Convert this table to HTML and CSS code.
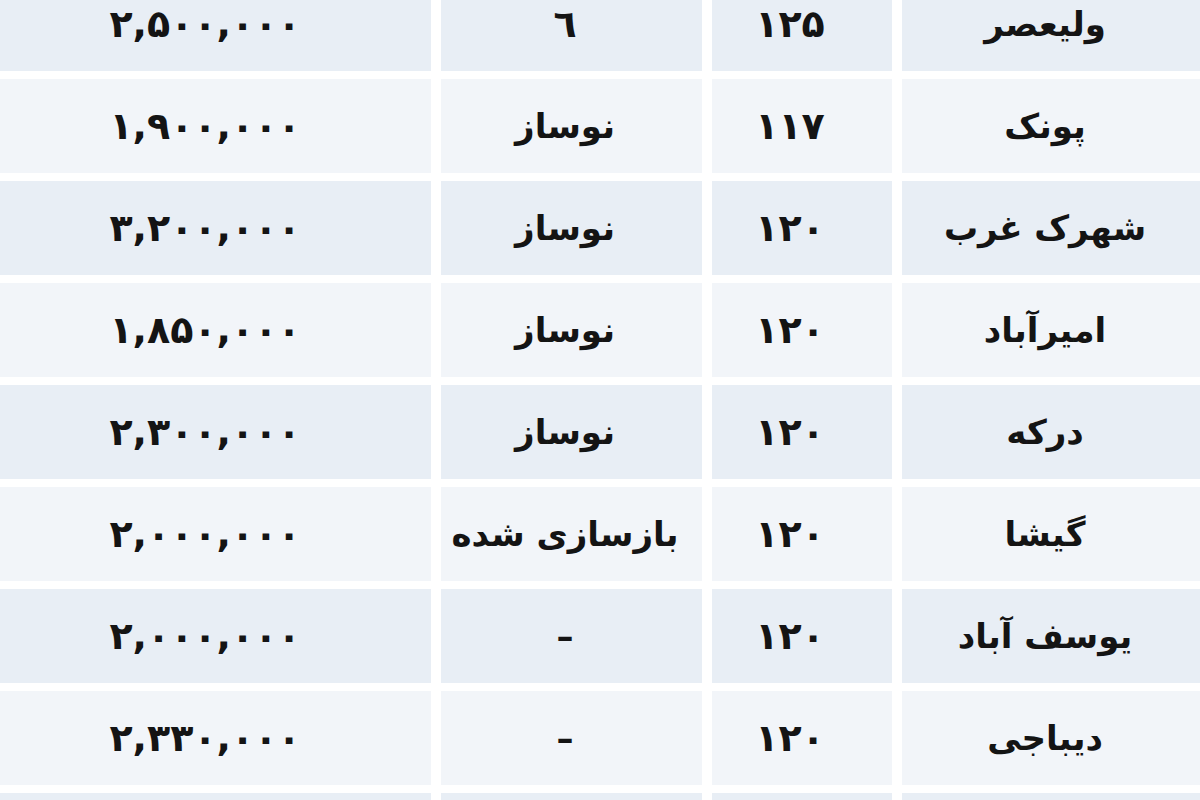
FILE: index.html
```html
<!DOCTYPE html>
<html lang="fa">
<head>
<meta charset="utf-8">
<title>قیمت</title>
<link rel="stylesheet" href="styles.css">
</head>
<body>
<div class="table" dir="rtl">
  <div class="row blue"><div class="cell c-area">ولیعصر</div><div class="cell c-size">۱۲۵</div><div class="cell c-age num">٦</div><div class="cell c-price">۲,۵۰۰,۰۰۰</div></div>
  <div class="row light"><div class="cell c-area">پونک</div><div class="cell c-size">۱۱۷</div><div class="cell c-age">نوساز</div><div class="cell c-price">۱,۹۰۰,۰۰۰</div></div>
  <div class="row blue"><div class="cell c-area">شهرک غرب</div><div class="cell c-size">۱۲۰</div><div class="cell c-age">نوساز</div><div class="cell c-price">۳,۲۰۰,۰۰۰</div></div>
  <div class="row light"><div class="cell c-area">امیرآباد</div><div class="cell c-size">۱۲۰</div><div class="cell c-age">نوساز</div><div class="cell c-price">۱,۸۵۰,۰۰۰</div></div>
  <div class="row blue"><div class="cell c-area">درکه</div><div class="cell c-size">۱۲۰</div><div class="cell c-age">نوساز</div><div class="cell c-price">۲,۳۰۰,۰۰۰</div></div>
  <div class="row light"><div class="cell c-area">گیشا</div><div class="cell c-size">۱۲۰</div><div class="cell c-age">بازسازی شده</div><div class="cell c-price">۲,۰۰۰,۰۰۰</div></div>
  <div class="row blue"><div class="cell c-area">یوسف آباد</div><div class="cell c-size">۱۲۰</div><div class="cell c-age">–</div><div class="cell c-price">۲,۰۰۰,۰۰۰</div></div>
  <div class="row light"><div class="cell c-area">دیباجی</div><div class="cell c-size">۱۲۰</div><div class="cell c-age">–</div><div class="cell c-price">۲,۳۳۰,۰۰۰</div></div>
  <div class="row blue"><div class="cell c-area"></div><div class="cell c-size"></div><div class="cell c-age"></div><div class="cell c-price"></div></div>
</div>
</body>
</html>
```
FILE: styles.css
```css
html, body {
  margin: 0;
  padding: 0;
  background: #ffffff;
  overflow: hidden;
}

.table {
  display: flex;
  flex-direction: column;
  gap: 8px;
  margin-top: -23px;
  width: 1200px;
  font-family: "DejaVu Sans", sans-serif;
  font-weight: bold;
  font-size: 34px;
  color: #141414;
}

.row {
  display: grid;
  grid-template-columns: 298px 180px 261px 431px;
  column-gap: 10px;
  height: 94px;
}

.cell {
  display: flex;
  align-items: center;
  justify-content: center;
  white-space: nowrap;
}

.blue .cell { background: #e8eef5; }
.light .cell { background: #f2f5f9; }

.c-area { padding-right: 12px; }
.c-size { padding-right: 24px; font-size: 38px; }
.c-age { padding-right: 13px; }
.c-age.num { font-size: 38px; }
.c-price { padding-right: 21px; font-size: 38px; direction: ltr; }
```
